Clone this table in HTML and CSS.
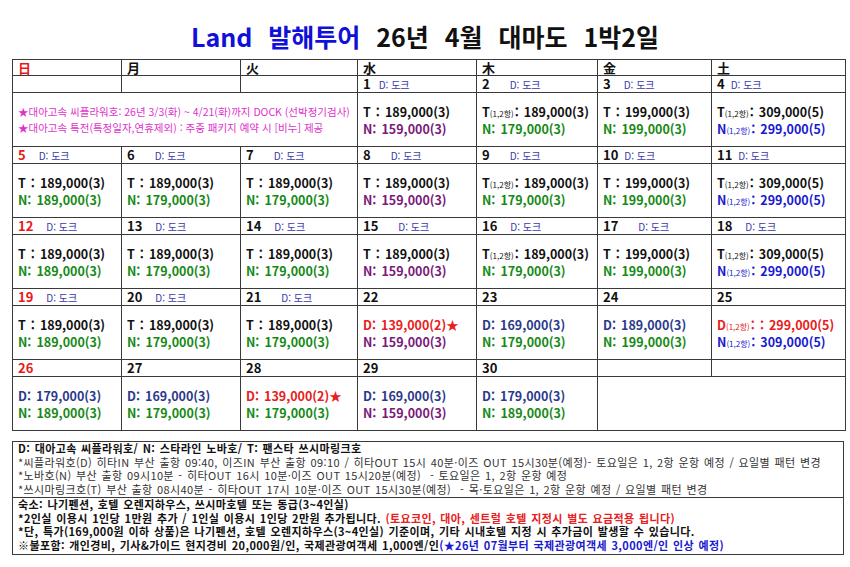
FILE: index.html
```html
<!DOCTYPE html>
<html lang="ko">
<head>
<meta charset="utf-8">
<title>Land 발해투어 26년 4월 대마도 1박2일</title>
<link rel="stylesheet" href="styles.css">
</head>
<body>
<h1 class="title"><span class="brand">Land 발해투어</span> 26년 4월 대마도 1박2일</h1>
<table class="cal">
  <colgroup>
    <col class="c1"><col class="c2"><col class="c3"><col class="c4"><col class="c5"><col class="c6"><col class="c7">
  </colgroup>
  <tr class="hd">
    <td class="sun">日</td><td>月</td><td>火</td><td>水</td><td>木</td><td>金</td><td>土</td>
  </tr>
  <tr class="dn">
    <td></td><td></td><td></td>
    <td><b>1</b><span class="d g8">D: 도크</span></td>
    <td><b>2</b><span class="d g20">D: 도크</span></td>
    <td><b>3</b><span class="d g13">D: 도크</span></td>
    <td><b>4</b><span class="d g6">D: 도크</span></td>
  </tr>
  <tr class="ct">
    <td colspan="3" class="notice">
      <div>★대아고속 씨플라워호: 26년 3/3(화) ~ 4/21(화)까지 DOCK (선박정기검사)</div>
      <div>★대아고속 특전(특정일자,연휴제외) : 주중 패키지 예약 시 [비누] 제공</div>
    </td>
    <td><div>T : 189,000(3)</div><div class="pu">N: 159,000(3)</div></td>
    <td><div>T<small>(1,2항)</small>: 189,000(3)</div><div class="gr">N: 179,000(3)</div></td>
    <td><div>T : 199,000(3)</div><div class="gr">N: 199,000(3)</div></td>
    <td><div>T<small>(1,2항)</small>: 309,000(5)</div><div class="bl">N<small>(1,2항)</small>: 299,000(5)</div></td>
  </tr>
  <tr class="dn">
    <td><b class="sun">5</b><span class="d g13">D: 도크</span></td>
    <td><b>6</b><span class="d g20">D: 도크</span></td>
    <td><b>7</b><span class="d g20">D: 도크</span></td>
    <td><b>8</b><span class="d g20">D: 도크</span></td>
    <td><b>9</b><span class="d g20">D: 도크</span></td>
    <td><b>10</b><span class="d g6">D: 도크</span></td>
    <td><b>11</b><span class="d g6">D: 도크</span></td>
  </tr>
  <tr class="ct">
    <td><div>T : 189,000(3)</div><div class="gr">N: 189,000(3)</div></td>
    <td><div>T : 189,000(3)</div><div class="gr">N: 179,000(3)</div></td>
    <td><div>T : 189,000(3)</div><div class="gr">N: 179,000(3)</div></td>
    <td><div>T : 189,000(3)</div><div class="pu">N: 159,000(3)</div></td>
    <td><div>T<small>(1,2항)</small>: 189,000(3)</div><div class="gr">N: 179,000(3)</div></td>
    <td><div>T : 199,000(3)</div><div class="gr">N: 199,000(3)</div></td>
    <td><div>T<small>(1,2항)</small>: 309,000(5)</div><div class="bl">N<small>(1,2항)</small>: 299,000(5)</div></td>
  </tr>
  <tr class="dn">
    <td><b class="sun">12</b><span class="d g13">D: 도크</span></td>
    <td><b>13</b><span class="d g13">D: 도크</span></td>
    <td><b>14</b><span class="d g13">D: 도크</span></td>
    <td><b>15</b><span class="d g20">D: 도크</span></td>
    <td><b>16</b><span class="d g13">D: 도크</span></td>
    <td><b>17</b><span class="d g20">D: 도크</span></td>
    <td><b>18</b><span class="d g13">D: 도크</span></td>
  </tr>
  <tr class="ct">
    <td><div>T : 189,000(3)</div><div class="gr">N: 189,000(3)</div></td>
    <td><div>T : 189,000(3)</div><div class="gr">N: 179,000(3)</div></td>
    <td><div>T : 189,000(3)</div><div class="gr">N: 179,000(3)</div></td>
    <td><div>T : 189,000(3)</div><div class="pu">N: 159,000(3)</div></td>
    <td><div>T<small>(1,2항)</small>: 189,000(3)</div><div class="gr">N: 179,000(3)</div></td>
    <td><div>T : 199,000(3)</div><div class="gr">N: 199,000(3)</div></td>
    <td><div>T<small>(1,2항)</small>: 309,000(5)</div><div class="bl">N<small>(1,2항)</small>: 299,000(5)</div></td>
  </tr>
  <tr class="dn">
    <td><b class="sun">19</b><span class="d g13">D: 도크</span></td>
    <td><b>20</b><span class="d g13">D: 도크</span></td>
    <td><b>21</b><span class="d g20">D: 도크</span></td>
    <td><b>22</b></td>
    <td><b>23</b></td>
    <td><b>24</b></td>
    <td><b>25</b></td>
  </tr>
  <tr class="ct">
    <td><div>T : 189,000(3)</div><div class="gr">N: 189,000(3)</div></td>
    <td><div>T : 189,000(3)</div><div class="gr">N: 179,000(3)</div></td>
    <td><div>T : 189,000(3)</div><div class="gr">N: 179,000(3)</div></td>
    <td><div class="rd">D: 139,000(2)★</div><div class="pu">N: 159,000(3)</div></td>
    <td><div class="db">D: 169,000(3)</div><div class="gr">N: 179,000(3)</div></td>
    <td><div class="db">D: 189,000(3)</div><div class="gr">N: 199,000(3)</div></td>
    <td><div class="rd">D<small>(1,2항)</small>: : 299,000(5)</div><div class="bl">N<small>(1,2항)</small>: 309,000(5)</div></td>
  </tr>
  <tr class="dn">
    <td><b class="sun">26</b></td>
    <td><b>27</b></td>
    <td><b>28</b></td>
    <td><b>29</b></td>
    <td><b>30</b></td>
    <td></td>
    <td></td>
  </tr>
  <tr class="ct">
    <td><div class="db">D: 179,000(3)</div><div class="gr">N: 189,000(3)</div></td>
    <td><div class="db">D: 169,000(3)</div><div class="gr">N: 179,000(3)</div></td>
    <td><div class="rd">D: 139,000(2)★</div><div class="gr">N: 179,000(3)</div></td>
    <td><div class="db">D: 169,000(3)</div><div class="pu">N: 159,000(3)</div></td>
    <td><div class="db">D: 179,000(3)</div><div class="gr">N: 189,000(3)</div></td>
    <td colspan="2"></td>
  </tr>
</table>

<div class="notes">
  <div class="sec">
    <p class="strong">D: 대아고속 씨플라워호/ N: 스타라인 노바호/ T: 팬스타 쓰시마링크호</p>
    <p>*씨플라워호(D) 히타IN 부산 출항 09:40, 이즈IN 부산 출항 09:10 / 히타OUT 15시 40분·이즈 OUT 15시30분(예정)- 토요일은 1, 2항 운항 예정 / 요일별 패턴 변경</p>
    <p>*노바호(N) 부산 출항 09시10분 - 히타OUT 16시 10분·이즈 OUT 15시20분(예정) &nbsp;- 토요일은 1, 2항 운항 예정</p>
    <p>*쓰시마링크호(T) 부산 출항 08시40분 - 히타OUT 17시 10분·이즈 OUT 15시30분(예정) &nbsp;- 목·토요일은 1, 2항 운항 예정 / 요일별 패턴 변경</p>
  </div>
  <div class="sec sec2">
    <p>숙소: 나기펜션, 호텔 오렌지하우스, 쓰시마호텔 또는 동급(3~4인실)</p>
    <p>*2인실 이용시 1인당 1만원 추가 / 1인실 이용시 1인당 2만원 추가됩니다. <span class="rd">(토요코인, 대아, 센트럴 호텔 지정시 별도 요금적용 됩니다)</span></p>
    <p>*단, 특가(169,000원 이하 상품)은 나기펜션, 호텔 오렌지하우스(3~4인실) 기준이며, 기타 시내호텔 지정 시 추가금이 발생할 수 있습니다.</p>
    <p>※불포함: 개인경비, 기사&amp;가이드 현지경비 20,000원/인, 국제관광여객세 1,000엔/인<span class="bl">(★26년 07월부터 국제관광여객세 3,000엔/인 인상 예정)</span></p>
  </div>
</div>
</body>
</html>
```
FILE: styles.css
```css
html, body {
  margin: 0;
  padding: 0;
  background: #fff;
}
body {
  width: 850px;
  font-family: "Noto Sans CJK KR", "Noto Sans", sans-serif;
  color: #111;
}
.title {
  margin: 0;
  height: 47px;
  padding-top: 12px;
  display: flex;
  align-items: center;
  justify-content: center;
  font-size: 25px;
  font-weight: 700;
  word-spacing: 9px;
  color: #111;
  line-height: 30px;
  white-space: pre;
}
.brand {
  color: #1010d8;
}
.cal {
  margin-left: 12px;
  width: 833px;
  border-collapse: collapse;
  table-layout: fixed;
}
.c1 { width: 109px; }
.c2 { width: 119px; }
.c3 { width: 117px; }
.c4 { width: 119px; }
.c5 { width: 121px; }
.c6 { width: 114px; }
.c7 { width: 134px; }
.cal td {
  border: 1px solid #3a3a3a;
  padding: 0 0 0 5px;
  vertical-align: middle;
  white-space: nowrap;
}
.ct td {
  overflow: hidden;
}
.hd td {
  height: 15px;
  font-size: 13px;
  font-weight: 700;
  line-height: 14px;
}
.sun { color: #e81818; }
.dn td {
  height: 16px;
  font-size: 13px;
  line-height: 14px;
}
.dn b { font-weight: 700; }
.d {
  font-size: 10px;
  line-height: 10px;
  color: #3a3aa8;
  font-weight: 400;
}
.g6 { margin-left: 6px; }
.g8 { margin-left: 8px; }
.g13 { margin-left: 13px; }
.g20 { margin-left: 20px; }
.ct td {
  height: 52px;
  font-size: 12.5px;
  font-weight: 700;
  line-height: 17px;
  word-spacing: 1.5px;
  padding-top: 1px;
  color: #111;
}
.ct small {
  font-size: 8px;
  line-height: 8px;
  font-weight: 400;
  word-spacing: 0;
  margin-right: 1px;
}
.gr { color: #168a16; }
.pu { color: #7a1a7a; }
.bl { color: #1a1ad0; }
.db { color: #2b3a8c; }
.rd { color: #e82020; }
.ct td.notice {
  font-size: 10.5px;
  font-weight: 400;
  word-spacing: 0;
  line-height: 16px;
  color: #e030cc;
  padding-top: 1px;
}
.notes {
  margin: 10px 0 0 12px;
  width: 830px;
  border: 1px solid #3a3a3a;
  font-size: 11px;
  line-height: 13.5px;
  letter-spacing: 0.38px;
  word-spacing: 1px;
}
.notes p {
  margin: 0;
  white-space: nowrap;
}
.sec {
  padding: 0 0 0 5px;
  height: 55px;
  color: #333;
}
.sec .strong {
  font-weight: 700;
  color: #111;
}
.sec2 {
  border-top: 1px solid #3a3a3a;
  height: 56px;
  font-weight: 700;
  color: #111;
}
```
